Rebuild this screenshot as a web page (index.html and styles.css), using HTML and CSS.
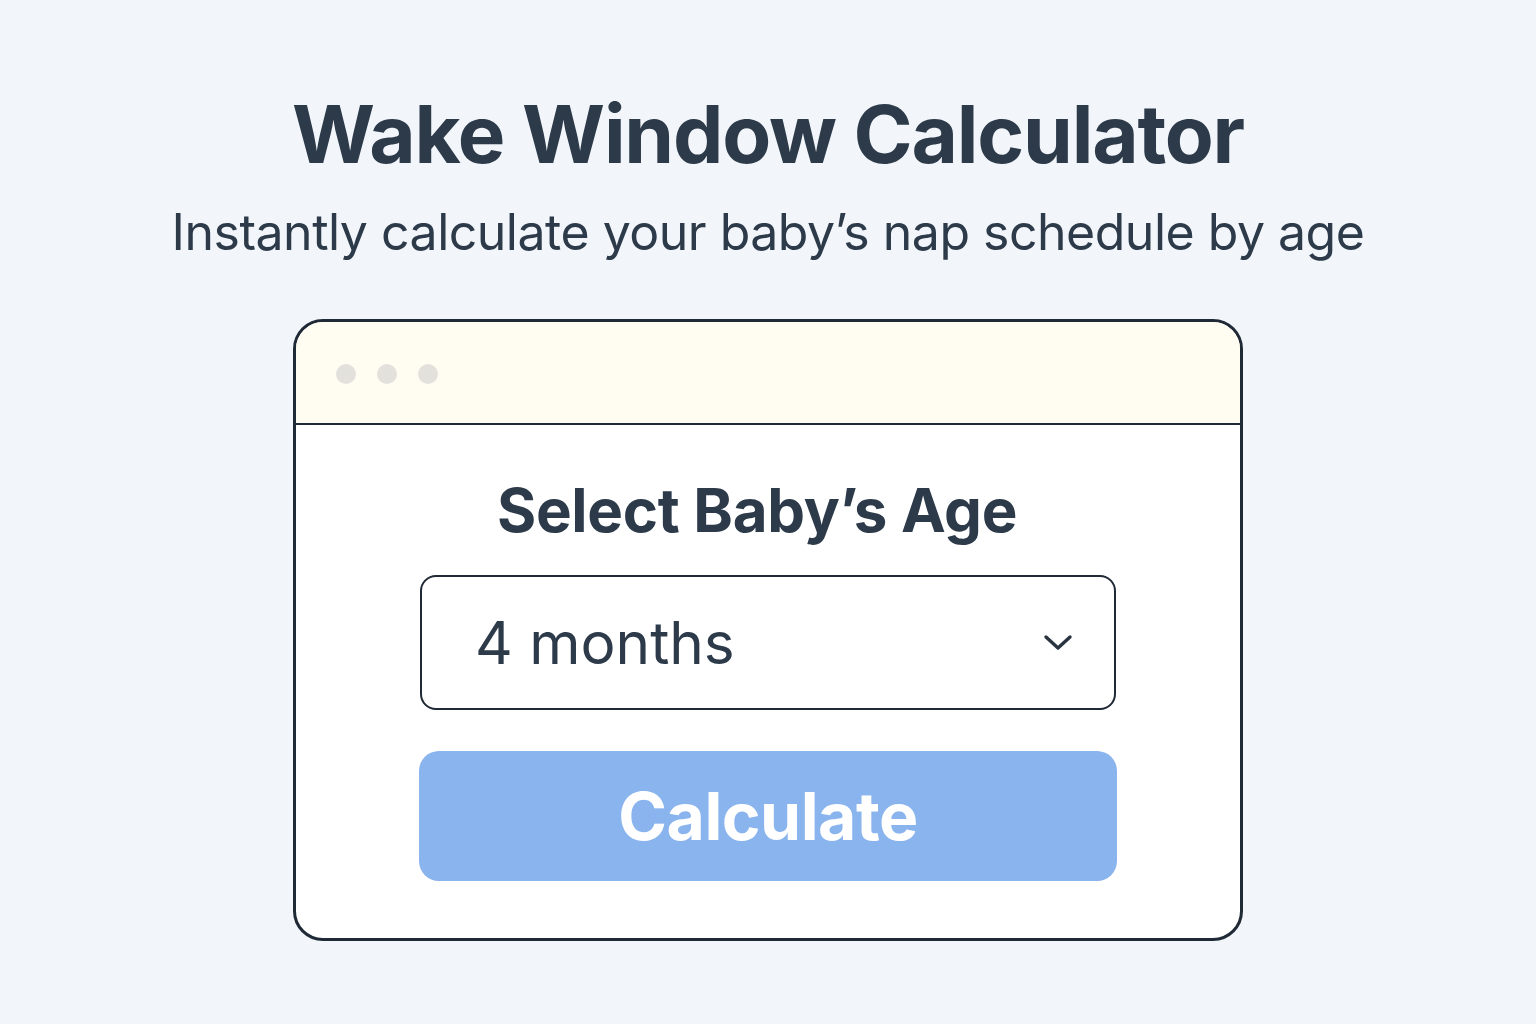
FILE: index.html
```html
<!DOCTYPE html>
<html>
<head>
<meta charset="utf-8">
<link rel="stylesheet" href="styles.css">
</head>
<body>
<main class="page">
  <h1 class="title">Wake Window Calculator</h1>
  <p class="subtitle">Instantly calculate your baby’s nap schedule by age</p>
  <section class="window">
    <div class="window-bar">
      <span class="dot"></span><span class="dot"></span><span class="dot"></span>
    </div>
    <div class="window-body">
      <h2 class="label">Select Baby’s Age</h2>
      <div class="select">
        <span class="select-value">4 months</span>
        <svg class="chevron" width="32" height="22" viewBox="0 0 32 22"><path d="M4 5 L16 16 L28 5" fill="none" stroke="#2a3441" stroke-width="3.4" stroke-linecap="round" stroke-linejoin="round"/></svg>
      </div>
      <button class="calc">Calculate</button>
    </div>
  </section>
</main>
</body>
</html>
```
FILE: styles.css
```css
html, body {
  margin: 0;
  padding: 0;
}
body {
  background: #f2f6fa;
  font-family: Inter, "Liberation Sans", sans-serif;
  color: #2d3a4a;
  width: 1536px;
  height: 1024px;
  overflow: hidden;
}
.page {
  display: flex;
  flex-direction: column;
  align-items: center;
  padding-top: 89px;
}
.title {
  margin: 0;
  font-size: 80px;
  font-weight: 700;
  line-height: 90px;
  letter-spacing: -1.2px;
  color: #2d3a4a;
}
.subtitle {
  margin: 25px 0 0;
  font-size: 50px;
  font-weight: 400;
  line-height: 56px;
  letter-spacing: -0.5px;
  color: #2d3a4a;
}
.window {
  margin-top: 59px;
  width: 950px;
  box-sizing: border-box;
  height: 622px;
  border: 3px solid #1f2a36;
  border-radius: 30px;
  background: #fff;
  overflow: hidden;
  display: flex;
  flex-direction: column;
}
.window-bar {
  height: 98px;
  background: #fffcf2;
  border-bottom: 2.5px solid #1f2a36;
  display: flex;
  align-items: center;
  gap: 21px;
  padding-left: 40px;
  padding-top: 3px;
  flex-shrink: 0;
}
.dot {
  width: 20px;
  height: 20px;
  border-radius: 50%;
  background: #e3e1dc;
}
.window-body {
  display: flex;
  flex-direction: column;
  align-items: center;
  padding-top: 50px;
}
.label {
  margin: 0 0 0 -22px;
  font-size: 60px;
  font-weight: 700;
  line-height: 70px;
  letter-spacing: -0.3px;
  color: #2d3a4a;
}
.select {
  margin-top: 30px;
  width: 696px;
  height: 135px;
  box-sizing: border-box;
  border: 2.5px solid #1f2a36;
  border-radius: 16px;
  display: flex;
  align-items: center;
  justify-content: space-between;
  padding: 0 40px 0 53px;
}
.select-value {
  font-size: 58.5px;
  font-weight: 400;
  color: #2d3a4a;
}
.calc {
  margin-top: 41px;
  width: 698px;
  height: 130px;
  border: none;
  border-radius: 20px;
  background: #8ab4ee;
  color: #fff;
  font-family: Inter, "Liberation Sans", sans-serif;
  font-size: 66px;
  font-weight: 700;
  letter-spacing: -0.5px;
}
```
